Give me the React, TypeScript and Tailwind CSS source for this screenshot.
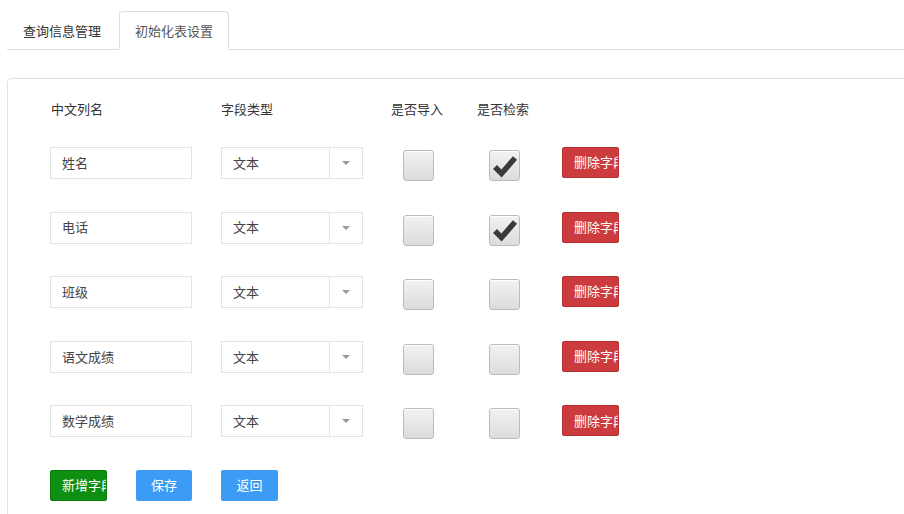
import React from "react";

const rows = [
  { name: "姓名", imp: false, search: true },
  { name: "电话", imp: false, search: true },
  { name: "班级", imp: false, search: false },
  { name: "语文成绩", imp: false, search: false },
  { name: "数学成绩", imp: false, search: false },
];

function Check({ checked }: { checked: boolean }) {
  return (
    <div className="w-[31px] h-[31px] rounded-[3px] border border-[#bcbcbc] bg-gradient-to-b from-[#f2f2f2] to-[#dcdcdc] flex items-center justify-center shadow-[inset_0_1px_0_#fff]">
      {checked && (
        <svg width="28" height="28" viewBox="0 0 28 28">
          <path d="M4 15 L10.5 21.5 L24 6" fill="none" stroke="#3a3a3a" strokeWidth="5.5" strokeLinejoin="miter" />
        </svg>
      )}
    </div>
  );
}

export default function App() {
  return (
    <div
      className="w-[904px] h-[514px] overflow-hidden bg-white text-[#333] text-[13px] pl-[7px]"
      style={{ fontFamily: '"Noto Sans CJK SC", "Noto Sans", sans-serif' }}
    >
      <div className="pt-[11px] flex border-b border-[#dddddd] h-[50px]">
        <div className="h-[39px] px-[15px] flex items-center border border-transparent mr-[2px] text-[#333]">
          查询信息管理
        </div>
        <div className="h-[39px] px-[15px] flex items-center border border-[#dddddd] border-b-white rounded-t-[4px] bg-white text-[#555] mb-[-1px]">
          初始化表设置
        </div>
      </div>
      <div className="mt-[28px] border-l border-t border-[#e2e2e2] rounded-tl-[5px] h-[500px] pl-[42px] pt-[20px]">
        <div className="flex h-[20px] items-center">
          <div className="w-[171px] pl-[1px]">中文列名</div>
          <div className="w-[170px]">字段类型</div>
          <div className="w-[86px]">是否导入</div>
          <div className="w-[85px]">是否检索</div>
        </div>
        <div className="mt-[28px] flex flex-col gap-[32.6px]">
          {rows.map((r) => (
            <div key={r.name} className="flex h-[32px] items-start">
              <div className="w-[171px]">
                <div className="w-[142px] h-[32px] border border-[#e3e3e3] flex items-center pl-[11px] pb-[1px] text-[#444]">
                  {r.name}
                </div>
              </div>
              <div className="w-[170px]">
                <div className="w-[142px] h-[32px] border border-[#e3e3e3] flex items-center text-[#444]">
                  <div className="flex-1 pl-[11px] pb-[1px]">文本</div>
                  <div className="w-[33px] h-full border-l border-[#e3e3e3] flex items-center justify-center">
                    <div className="w-0 h-0 border-l-[4px] border-r-[4px] border-t-[4px] border-l-transparent border-r-transparent border-t-[#999]" />
                  </div>
                </div>
              </div>
              <div className="w-[86px] pt-[3px] pl-[12px]">
                <Check checked={r.imp} />
              </div>
              <div className="w-[85px] pt-[3px] pl-[12px]">
                <Check checked={r.search} />
              </div>
              <div className="w-[57px] h-[31px] bg-[#cc3b3d] border border-[#b93032] rounded-[2px] text-white flex items-center pl-[11px] pb-[1px] overflow-hidden whitespace-nowrap">
                删除字段
              </div>
            </div>
          ))}
        </div>
        <div className="mt-[32.6px] flex items-start">
          <div className="w-[57px] h-[31px] bg-[#0f8f11] border border-[#0b7d0d] rounded-[2px] text-white flex items-center pl-[11px] pb-[1px] overflow-hidden whitespace-nowrap mr-[29px]">
            新增字段
          </div>
          <div className="w-[56px] h-[31px] bg-[#3c9bf4] rounded-[2px] text-white flex items-center justify-center pb-[1px] mr-[29px]">
            保存
          </div>
          <div className="w-[57px] h-[31px] bg-[#3c9bf4] rounded-[2px] text-white flex items-center justify-center pb-[1px]">
            返回
          </div>
        </div>
      </div>
    </div>
  );
}
